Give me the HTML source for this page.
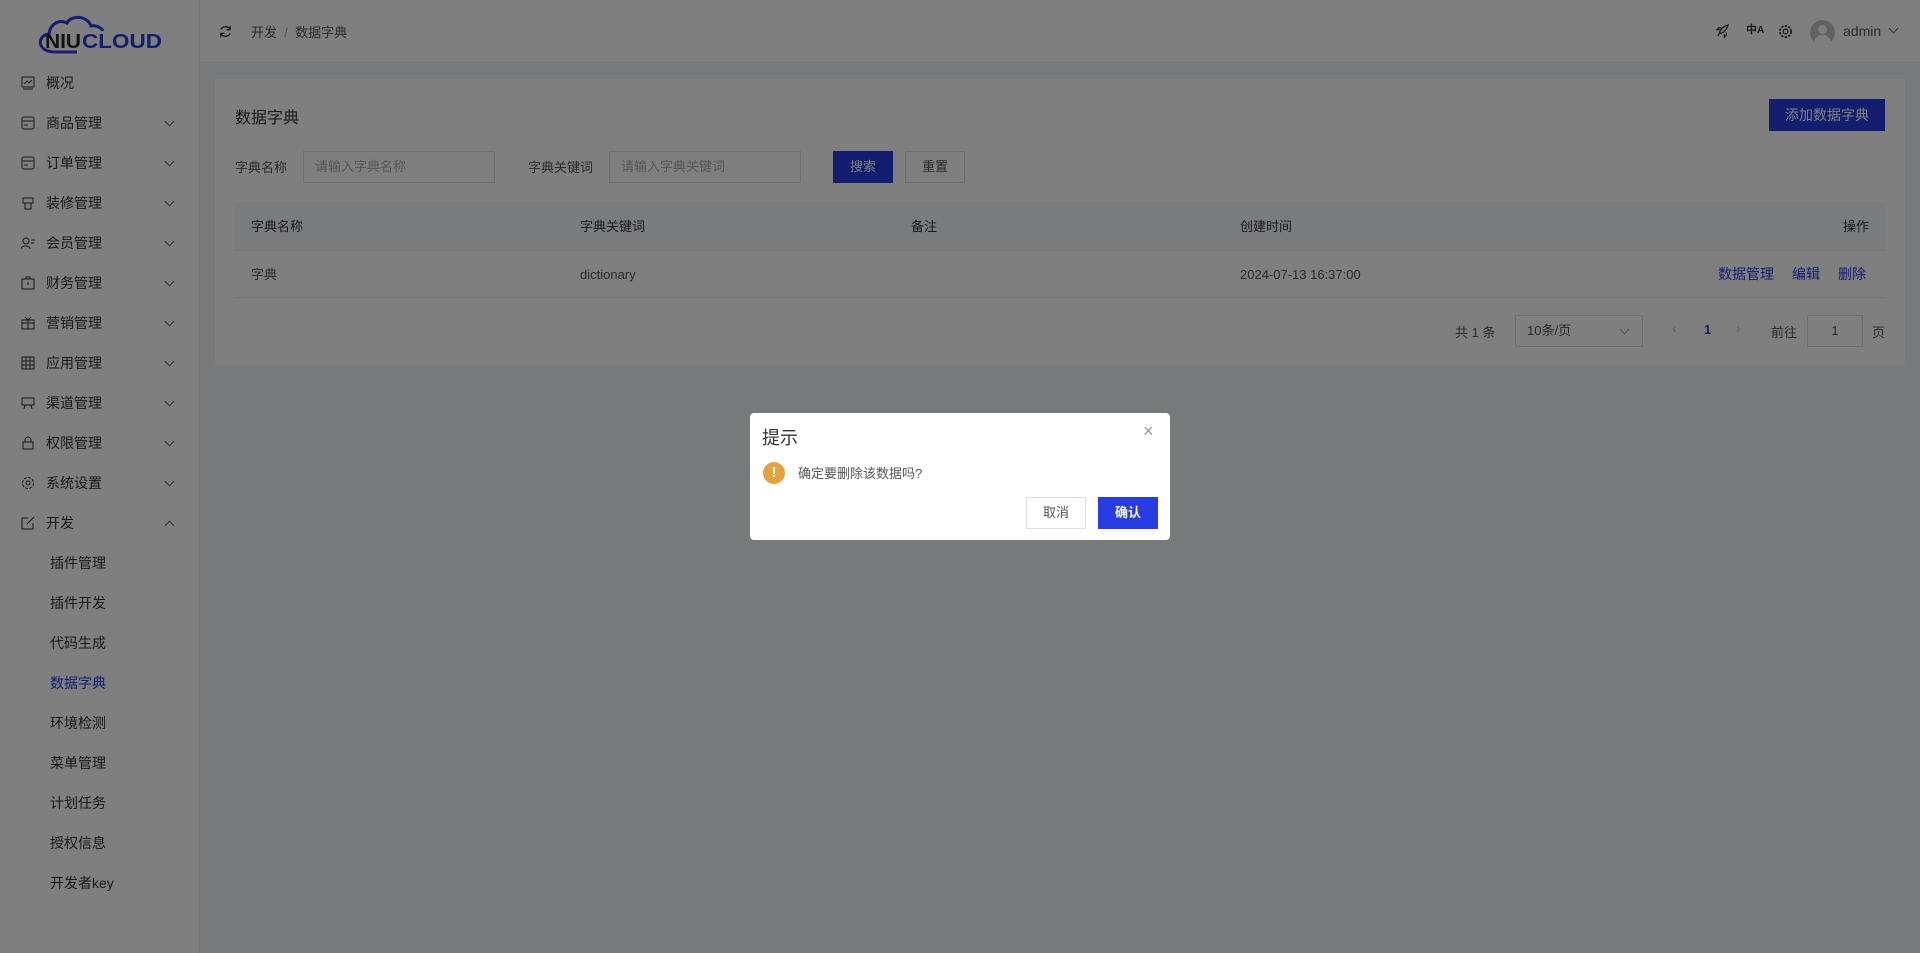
<!DOCTYPE html>
<html><head><meta charset="utf-8"><style>
*{box-sizing:border-box;margin:0;padding:0}
body{width:1920px;height:953px;overflow:hidden;background:#f0f2f5;font-family:"Liberation Sans","Noto Sans CJK SC",sans-serif;font-size:14px;color:#333;position:relative}
.abs{position:absolute}
.side{position:absolute;left:0;top:0;width:200px;height:953px;background:#fff;border-right:1px solid #e8e8e8}
.mi{position:absolute;left:0;width:200px;height:40px;line-height:40px;font-size:14px;color:#333}
.mi .t{position:absolute;left:46px}
.mi .ic{position:absolute;left:21px;top:13px;width:14px;height:14px}
.mi .ar{position:absolute;left:166px;top:15px;width:7px;height:7px;border-right:1px solid #666;border-bottom:1px solid #666;transform:rotate(45deg)}
.sub{position:absolute;left:50px;font-size:14px;color:#333;line-height:20px}
.hdr{position:absolute;left:200px;top:0;right:0;height:63px;background:#fff;border-bottom:1px solid #e6e6e6}
.card{position:absolute;left:215px;top:79px;width:1690px;height:287px;background:#fff}
.inp{position:absolute;height:32px;border:1px solid #dcdfe6;background:#fff;color:#a8abb2;font-size:13px;line-height:30px;padding-left:11px}
.btn{position:absolute;height:32px;line-height:30px;text-align:center;font-size:13px;border:1px solid #dcdfe6}
.ov{position:absolute;left:0;top:0;width:1920px;height:953px;background:rgba(0,0,0,0.5)}
.dlg{position:absolute;left:750px;top:413px;width:420px;height:127px;background:#fff;border-radius:4px}
</style></head><body>
<div class="side">
<svg class="abs" style="left:37px;top:12px" width="127" height="42" viewBox="0 0 127 42">
<path d="M6 36 C1 32 3 23 12 22 C13 12 22 7 30 11 C34 3 50 3 54 14 C58 13 64 15 66 19" fill="none" stroke="#273ce2" stroke-width="3"/>
<path d="M6 36 Q9 40 20 40 L40 40" fill="none" stroke="#273ce2" stroke-width="3"/>
<text x="8" y="36" font-family="Liberation Sans" font-weight="bold" font-size="20" fill="#222" textLength="36" lengthAdjust="spacingAndGlyphs">NIU</text>
<text x="45" y="36" font-family="Liberation Sans" font-weight="bold" font-size="20" fill="#273ce2" textLength="80" lengthAdjust="spacingAndGlyphs">CLOUD</text>
</svg>
<div class="mi" style="top:63px"><svg class="ic" viewBox="0 0 14 14"><rect x="1" y="1" width="12" height="10" fill="none" stroke="#333"/><path d="M3 8l3-3 2 2 3-3M2 13h10" fill="none" stroke="#333"/></svg><span class="t">概况</span></div>
<div class="mi" style="top:103px"><svg class="ic" viewBox="0 0 14 14"><rect x="1" y="1" width="12" height="12" rx="2" fill="none" stroke="#333"/><path d="M1 5h12M3 9h4" stroke="#333"/></svg><span class="t">商品管理</span><i class="ar"></i></div>
<div class="mi" style="top:143px"><svg class="ic" viewBox="0 0 14 14"><rect x="1" y="1" width="12" height="12" rx="2" fill="none" stroke="#333"/><path d="M1 5h12M3 9h4" stroke="#333"/></svg><span class="t">订单管理</span><i class="ar"></i></div>
<div class="mi" style="top:183px"><svg class="ic" viewBox="0 0 14 14"><path d="M2 2h10v5H2zM4 7v6h6V7" fill="none" stroke="#333"/></svg><span class="t">装修管理</span><i class="ar"></i></div>
<div class="mi" style="top:223px"><svg class="ic" viewBox="0 0 14 14"><circle cx="5" cy="5" r="3" fill="none" stroke="#333"/><path d="M0 13c0-4 9-4 9 0M10 4h4M10 7h3" fill="none" stroke="#333"/></svg><span class="t">会员管理</span><i class="ar"></i></div>
<div class="mi" style="top:263px"><svg class="ic" viewBox="0 0 14 14"><rect x="1" y="3" width="12" height="10" fill="none" stroke="#333"/><path d="M5 3V1h4v2M7 6v3" fill="none" stroke="#333"/></svg><span class="t">财务管理</span><i class="ar"></i></div>
<div class="mi" style="top:303px"><svg class="ic" viewBox="0 0 14 14"><rect x="1" y="4" width="12" height="9" fill="none" stroke="#333"/><path d="M7 4v9M1 7h12M4 1l3 3 3-3" fill="none" stroke="#333"/></svg><span class="t">营销管理</span><i class="ar"></i></div>
<div class="mi" style="top:343px"><svg class="ic" viewBox="0 0 14 14"><rect x="1" y="1" width="12" height="12" fill="none" stroke="#333"/><path d="M1 5h12M1 9h12M5 1v12M9 1v12" stroke="#333"/></svg><span class="t">应用管理</span><i class="ar"></i></div>
<div class="mi" style="top:383px"><svg class="ic" viewBox="0 0 14 14"><path d="M1 2h12v7H1zM4 9l-1 4M10 9l1 4" fill="none" stroke="#333"/></svg><span class="t">渠道管理</span><i class="ar"></i></div>
<div class="mi" style="top:423px"><svg class="ic" viewBox="0 0 14 14"><rect x="2" y="6" width="10" height="7" fill="none" stroke="#333"/><path d="M4 6V4a3 3 0 016 0v2" fill="none" stroke="#333"/></svg><span class="t">权限管理</span><i class="ar"></i></div>
<div class="mi" style="top:463px"><svg class="ic" viewBox="0 0 14 14"><circle cx="7" cy="7" r="2" fill="none" stroke="#333"/><circle cx="7" cy="7" r="5.5" fill="none" stroke="#333" stroke-dasharray="3 1.3"/></svg><span class="t">系统设置</span><i class="ar"></i></div>
<div class="mi" style="top:503px"><svg class="ic" viewBox="0 0 14 14"><path d="M7 2H1v11h11V7M6 8l7-7" fill="none" stroke="#333"/></svg><span class="t">开发</span><i class="ar" style="transform:rotate(-135deg);top:19px"></i></div>
<div class="sub" style="top:553px">插件管理</div>
<div class="sub" style="top:593px">插件开发</div>
<div class="sub" style="top:633px">代码生成</div>
<div class="sub" style="top:673px;color:#273ce2">数据字典</div>
<div class="sub" style="top:713px">环境检测</div>
<div class="sub" style="top:753px">菜单管理</div>
<div class="sub" style="top:793px">计划任务</div>
<div class="sub" style="top:833px">授权信息</div>
<div class="sub" style="top:873px">开发者key</div>
</div>
<div class="hdr">
<svg class="abs" style="left:19px;top:25px" width="13" height="13" viewBox="0 0 14 14"><path d="M12 5A5.5 5.5 0 002 5M2 9a5.5 5.5 0 0010 0M12 1v4H8M2 13V9h4" fill="none" stroke="#333" stroke-width="1.4"/></svg>
<div class="abs" style="left:51px;top:22px;color:#555;font-size:13px">开发 &nbsp;<span style="color:#aaa">/</span>&nbsp; 数据字典</div>
<svg class="abs" style="left:1515px;top:24px" width="15" height="15" viewBox="0 0 16 16"><path d="M3 13l2-4M6 10c4-1 7-5 8-9-4 1-8 4-9 8zM5 6H2l2-2h3M10 11v3l2-2V9" fill="none" stroke="#333" stroke-width="1.3"/></svg>
<div class="abs" style="left:1546px;top:21px;font-size:11px;font-weight:bold;color:#333">中<span style="font-size:10px">A</span></div>
<svg class="abs" style="left:1578px;top:24px" width="15" height="15" viewBox="0 0 16 16"><circle cx="8" cy="8" r="2.5" fill="none" stroke="#333" stroke-width="1.3"/><circle cx="8" cy="8" r="6" fill="none" stroke="#333" stroke-width="1.8" stroke-dasharray="2.5 1.4"/></svg>
<div class="abs" style="left:1610px;top:20px;width:25px;height:25px;border-radius:50%;background:#c0c4cc;overflow:hidden"><div class="abs" style="left:8px;top:5px;width:9px;height:9px;border-radius:50%;background:#fff"></div><div class="abs" style="left:4px;top:15px;width:17px;height:12px;border-radius:8px 8px 0 0;background:#fff"></div></div>
<div class="abs" style="left:1643px;top:23px;font-size:14px;color:#555">admin</div>
<div class="abs" style="left:1690px;top:25px;width:7px;height:7px;border-right:1px solid #666;border-bottom:1px solid #666;transform:rotate(45deg)"></div>
</div>
<div class="card">
<div class="abs" style="left:20px;top:25px;font-size:16px;color:#333">数据字典</div>
<div class="btn" style="left:1554px;top:20px;width:116px;height:32px;background:#273ce2;color:#fff;border-color:#273ce2;font-size:14px">添加数据字典</div>
<div class="abs" style="left:20px;top:78px;font-size:13px;color:#555">字典名称</div>
<div class="inp" style="left:88px;top:72px;width:192px">请输入字典名称</div>
<div class="abs" style="left:313px;top:78px;font-size:13px;color:#555">字典关键词</div>
<div class="inp" style="left:394px;top:72px;width:192px">请输入字典关键词</div>
<div class="btn" style="left:618px;top:72px;width:60px;background:#273ce2;color:#fff;border-color:#273ce2">搜索</div>
<div class="btn" style="left:690px;top:72px;width:60px;background:#fff;color:#555">重置</div>
<div class="abs" style="left:20px;top:123px;width:1650px;height:49px;background:#f5f7fa;border-bottom:1px solid #ebeef5;font-size:13px;color:#333;line-height:49px">
<span class="abs" style="left:16px">字典名称</span><span class="abs" style="left:345px">字典关键词</span><span class="abs" style="left:676px">备注</span><span class="abs" style="left:1005px">创建时间</span><span class="abs" style="right:16px">操作</span></div>
<div class="abs" style="left:20px;top:172px;width:1650px;height:47px;border-bottom:1px solid #ebeef5;font-size:13px;color:#555;line-height:47px">
<span class="abs" style="left:16px">字典</span><span class="abs" style="left:345px">dictionary</span><span class="abs" style="left:1005px">2024-07-13 16:37:00</span>
<span class="abs" style="left:1483px;color:#273ce2;font-size:14px">数据管理</span><span class="abs" style="left:1557px;color:#273ce2;font-size:14px">编辑</span><span class="abs" style="left:1603px;color:#273ce2;font-size:14px">删除</span></div>
<div class="abs" style="left:1240px;top:243px;font-size:13px;color:#555">共 1 条</div>
<div class="inp" style="left:1300px;top:236px;width:128px;color:#555">10条/页<i class="abs" style="right:14px;top:10px;width:7px;height:7px;border-right:1px solid #aaa;border-bottom:1px solid #aaa;transform:rotate(45deg)"></i></div>
<div class="abs" style="left:1457px;top:241px;color:#bbb">‹</div>
<div class="abs" style="left:1489px;top:243px;color:#273ce2;font-weight:bold;font-size:13px">1</div>
<div class="abs" style="left:1521px;top:241px;color:#bbb">›</div>
<div class="abs" style="left:1556px;top:243px;font-size:13px;color:#555">前往</div>
<div class="inp" style="left:1592px;top:236px;width:56px;text-align:center;padding:0;color:#555">1</div>
<div class="abs" style="left:1657px;top:243px;font-size:13px;color:#555">页</div>
</div>
<div class="ov"></div>
<div class="dlg">
<div class="abs" style="left:12px;top:11px;font-size:18px;color:#333">提示</div>
<div class="abs" style="left:393px;top:8px;font-size:18px;color:#999">×</div>
<div class="abs" style="left:13px;top:49px;width:22px;height:22px;border-radius:50%;background:#e6a23c;color:#fff;font-weight:bold;text-align:center;line-height:22px;font-size:15px">!</div>
<div class="abs" style="left:48px;top:50px;font-size:13px;color:#555">确定要删除该数据吗?</div>
<div class="btn" style="left:276px;top:84px;width:60px;background:#fff;color:#555">取消</div>
<div class="btn" style="left:348px;top:84px;width:60px;background:#273ce2;border-color:#273ce2;color:#fff;font-weight:bold">确认</div>
</div>
</body></html>
